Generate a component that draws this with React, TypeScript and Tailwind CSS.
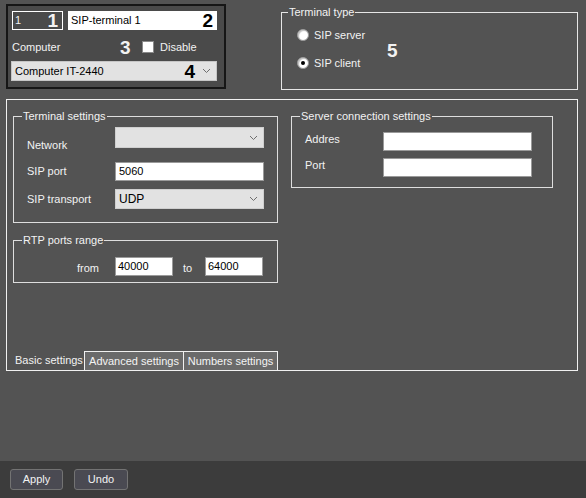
import React from "react";

const Chevron = () => (
  <svg width="9" height="6" viewBox="0 0 9 6" className="shrink-0">
    <polyline points="1,1 4.5,4.5 8,1" fill="none" stroke="#6e6e6e" strokeWidth="1" />
  </svg>
);

const Radio = ({ checked }: { checked?: boolean }) => (
  <span className="w-[12px] h-[12px] rounded-full bg-white border border-[#9a9a9a] flex items-center justify-center shrink-0 shadow-[inset_1px_1px_1px_rgba(0,0,0,0.25)]">
    {checked && <span className="w-[4px] h-[4px] rounded-full bg-black" />}
  </span>
);

export default function App() {
  return (
    <div className="w-[586px] h-[498px] bg-[#535353] flex flex-col text-[11px] leading-[13px] text-[#f2f2f2] font-['Liberation_Sans',Arial,sans-serif] overflow-hidden">
      {/* Top row */}
      <div className="flex h-[86px] mt-[4px] pl-[6px]">
        <div className="w-[220px] h-[85px] border-2 border-[#161616] bg-[#4a4a4a] px-[3px] pt-[5px] flex flex-col">
          <div className="flex gap-[5px] ml-[1px]">
            <div className="w-[51px] h-[19px] border border-white flex items-center justify-between pl-[2px] pr-[4px]">
              <span>1</span>
              <span className="text-[19px] font-bold leading-none">1</span>
            </div>
            <div className="w-[149px] h-[19px] bg-white text-black flex items-center justify-between pl-[3px] pr-[4px]">
              <span>SIP-terminal 1</span>
              <span className="text-[19px] font-bold leading-none">2</span>
            </div>
          </div>
          <div className="flex items-center h-[20px] mt-[7px] ml-[1px]">
            <span className="w-[108px]">Computer</span>
            <span className="w-[22px] text-[19px] font-bold leading-none">3</span>
            <span className="w-[12px] h-[12px] bg-white border border-[#8a8a8a]" />
            <span className="ml-[6px]">Disable</span>
          </div>
          <div className="mt-[4px] w-[206px] h-[20px] bg-[#e2e2e2] border border-[#c6c6c6] text-black flex items-center pl-[3px] pr-[5px]">
            <span className="flex-1">Computer IT-2440</span>
            <span className="text-[19px] font-bold leading-none mr-[7px]">4</span>
            <Chevron />
          </div>
        </div>
        <fieldset className="ml-[55px] mt-[2px] w-[297px] h-[84px] border border-[#e6e6e6] pl-[15px]">
          <legend className="ml-[-9px] px-[1px] leading-[12px]">Terminal type</legend>
          <div className="flex items-center">
            <div className="flex flex-col gap-[14px] mt-[10px] w-[90px]">
              <label className="flex items-center gap-[5px] h-[14px]">
                <Radio />
                <span>SIP server</span>
              </label>
              <label className="flex items-center gap-[5px] h-[14px]">
                <Radio checked />
                <span>SIP client</span>
              </label>
            </div>
            <span className="mt-[12px] text-[19px] font-bold leading-none">5</span>
          </div>
        </fieldset>
      </div>

      {/* Main panel */}
      <div className="mt-[9px] ml-[6px] w-[572px] h-[272px] border border-[#f0f0f0] flex flex-col">
        <div className="flex">
          <div className="flex flex-col ml-[6px]">
            <fieldset className="mt-[10px] w-[265px] h-[113px] border border-[#dedede] pl-[13px]">
              <legend className="ml-[-5px] px-[1px] leading-[12px]">Terminal settings</legend>
              <div className="flex mt-[5px] h-[21px]">
                <span className="w-[88px] pt-[12px]">Network</span>
                <div className="w-[149px] h-[21px] bg-[#e2e2e2] border border-[#cfcfcf] flex items-center justify-end pr-[5px]">
                  <Chevron />
                </div>
              </div>
              <div className="flex items-center mt-[14px] h-[19px]">
                <span className="w-[88px]">SIP port</span>
                <div className="w-[149px] h-[19px] bg-white border border-[#9a9a9a] text-black flex items-center pl-[3px]">5060</div>
              </div>
              <div className="flex items-center mt-[8px] h-[20px]">
                <span className="w-[88px]">SIP transport</span>
                <div className="w-[149px] h-[20px] bg-[#e2e2e2] border border-[#cfcfcf] text-black flex items-center pl-[3px] pr-[5px]">
                  <span className="flex-1 text-[12px]">UDP</span>
                  <Chevron />
                </div>
              </div>
            </fieldset>
            <fieldset className="mt-[11px] w-[265px] h-[49px] border border-[#dedede]">
              <legend className="ml-[8px] px-[1px] leading-[12px]">RTP ports range</legend>
              <div className="flex items-center mt-[11px] h-[19px]">
                <span className="w-[101px] pl-[63px] pt-[3px]">from</span>
                <div className="w-[58px] h-[19px] bg-white border border-[#9a9a9a] text-black flex items-center pl-[2px]">40000</div>
                <span className="w-[32px] pl-[10px] pt-[3px]">to</span>
                <div className="w-[58px] h-[19px] bg-white border border-[#9a9a9a] text-black flex items-center pl-[2px]">64000</div>
              </div>
            </fieldset>
          </div>
          <fieldset className="ml-[13px] mt-[10px] w-[262px] h-[78px] border border-[#dedede] pl-[13px]">
            <legend className="ml-[-5px] px-[1px] leading-[12px]">Server connection settings</legend>
            <div className="flex mt-[10px] h-[19px]">
              <span className="w-[78px] pt-[1px]">Addres</span>
              <div className="w-[149px] h-[19px] bg-white border border-[#9a9a9a]" />
            </div>
            <div className="flex mt-[7px] h-[19px]">
              <span className="w-[78px] pt-[1px]">Port</span>
              <div className="w-[149px] h-[19px] bg-white border border-[#9a9a9a]" />
            </div>
          </fieldset>
        </div>
        <div className="mt-auto flex h-[19px]">
          <div className="w-[77px] pl-[8px] flex items-center">Basic settings</div>
          <div className="w-[100px] bg-[#6a6a6a] border-l border-t border-r border-[#f0f0f0] flex items-center justify-center text-[#f4f4f4]">Advanced settings</div>
          <div className="w-[94px] bg-[#6a6a6a] border-t border-r border-[#f0f0f0] flex items-center justify-center text-[#f4f4f4]">Numbers settings</div>
        </div>
      </div>

      <div className="flex-1" />

      {/* Footer */}
      <div className="h-[37px] bg-[#3c3c3c] flex items-start pt-[8px] pl-[10px] gap-[11px]">
        <button className="w-[53px] h-[21px] bg-[#4a4a52] border border-[#737373] rounded-[3px] text-[#f2f2f2] text-[11px] flex items-center justify-center">Apply</button>
        <button className="w-[54px] h-[21px] bg-[#4a4a52] border border-[#737373] rounded-[3px] text-[#f2f2f2] text-[11px] flex items-center justify-center">Undo</button>
      </div>
    </div>
  );
}
